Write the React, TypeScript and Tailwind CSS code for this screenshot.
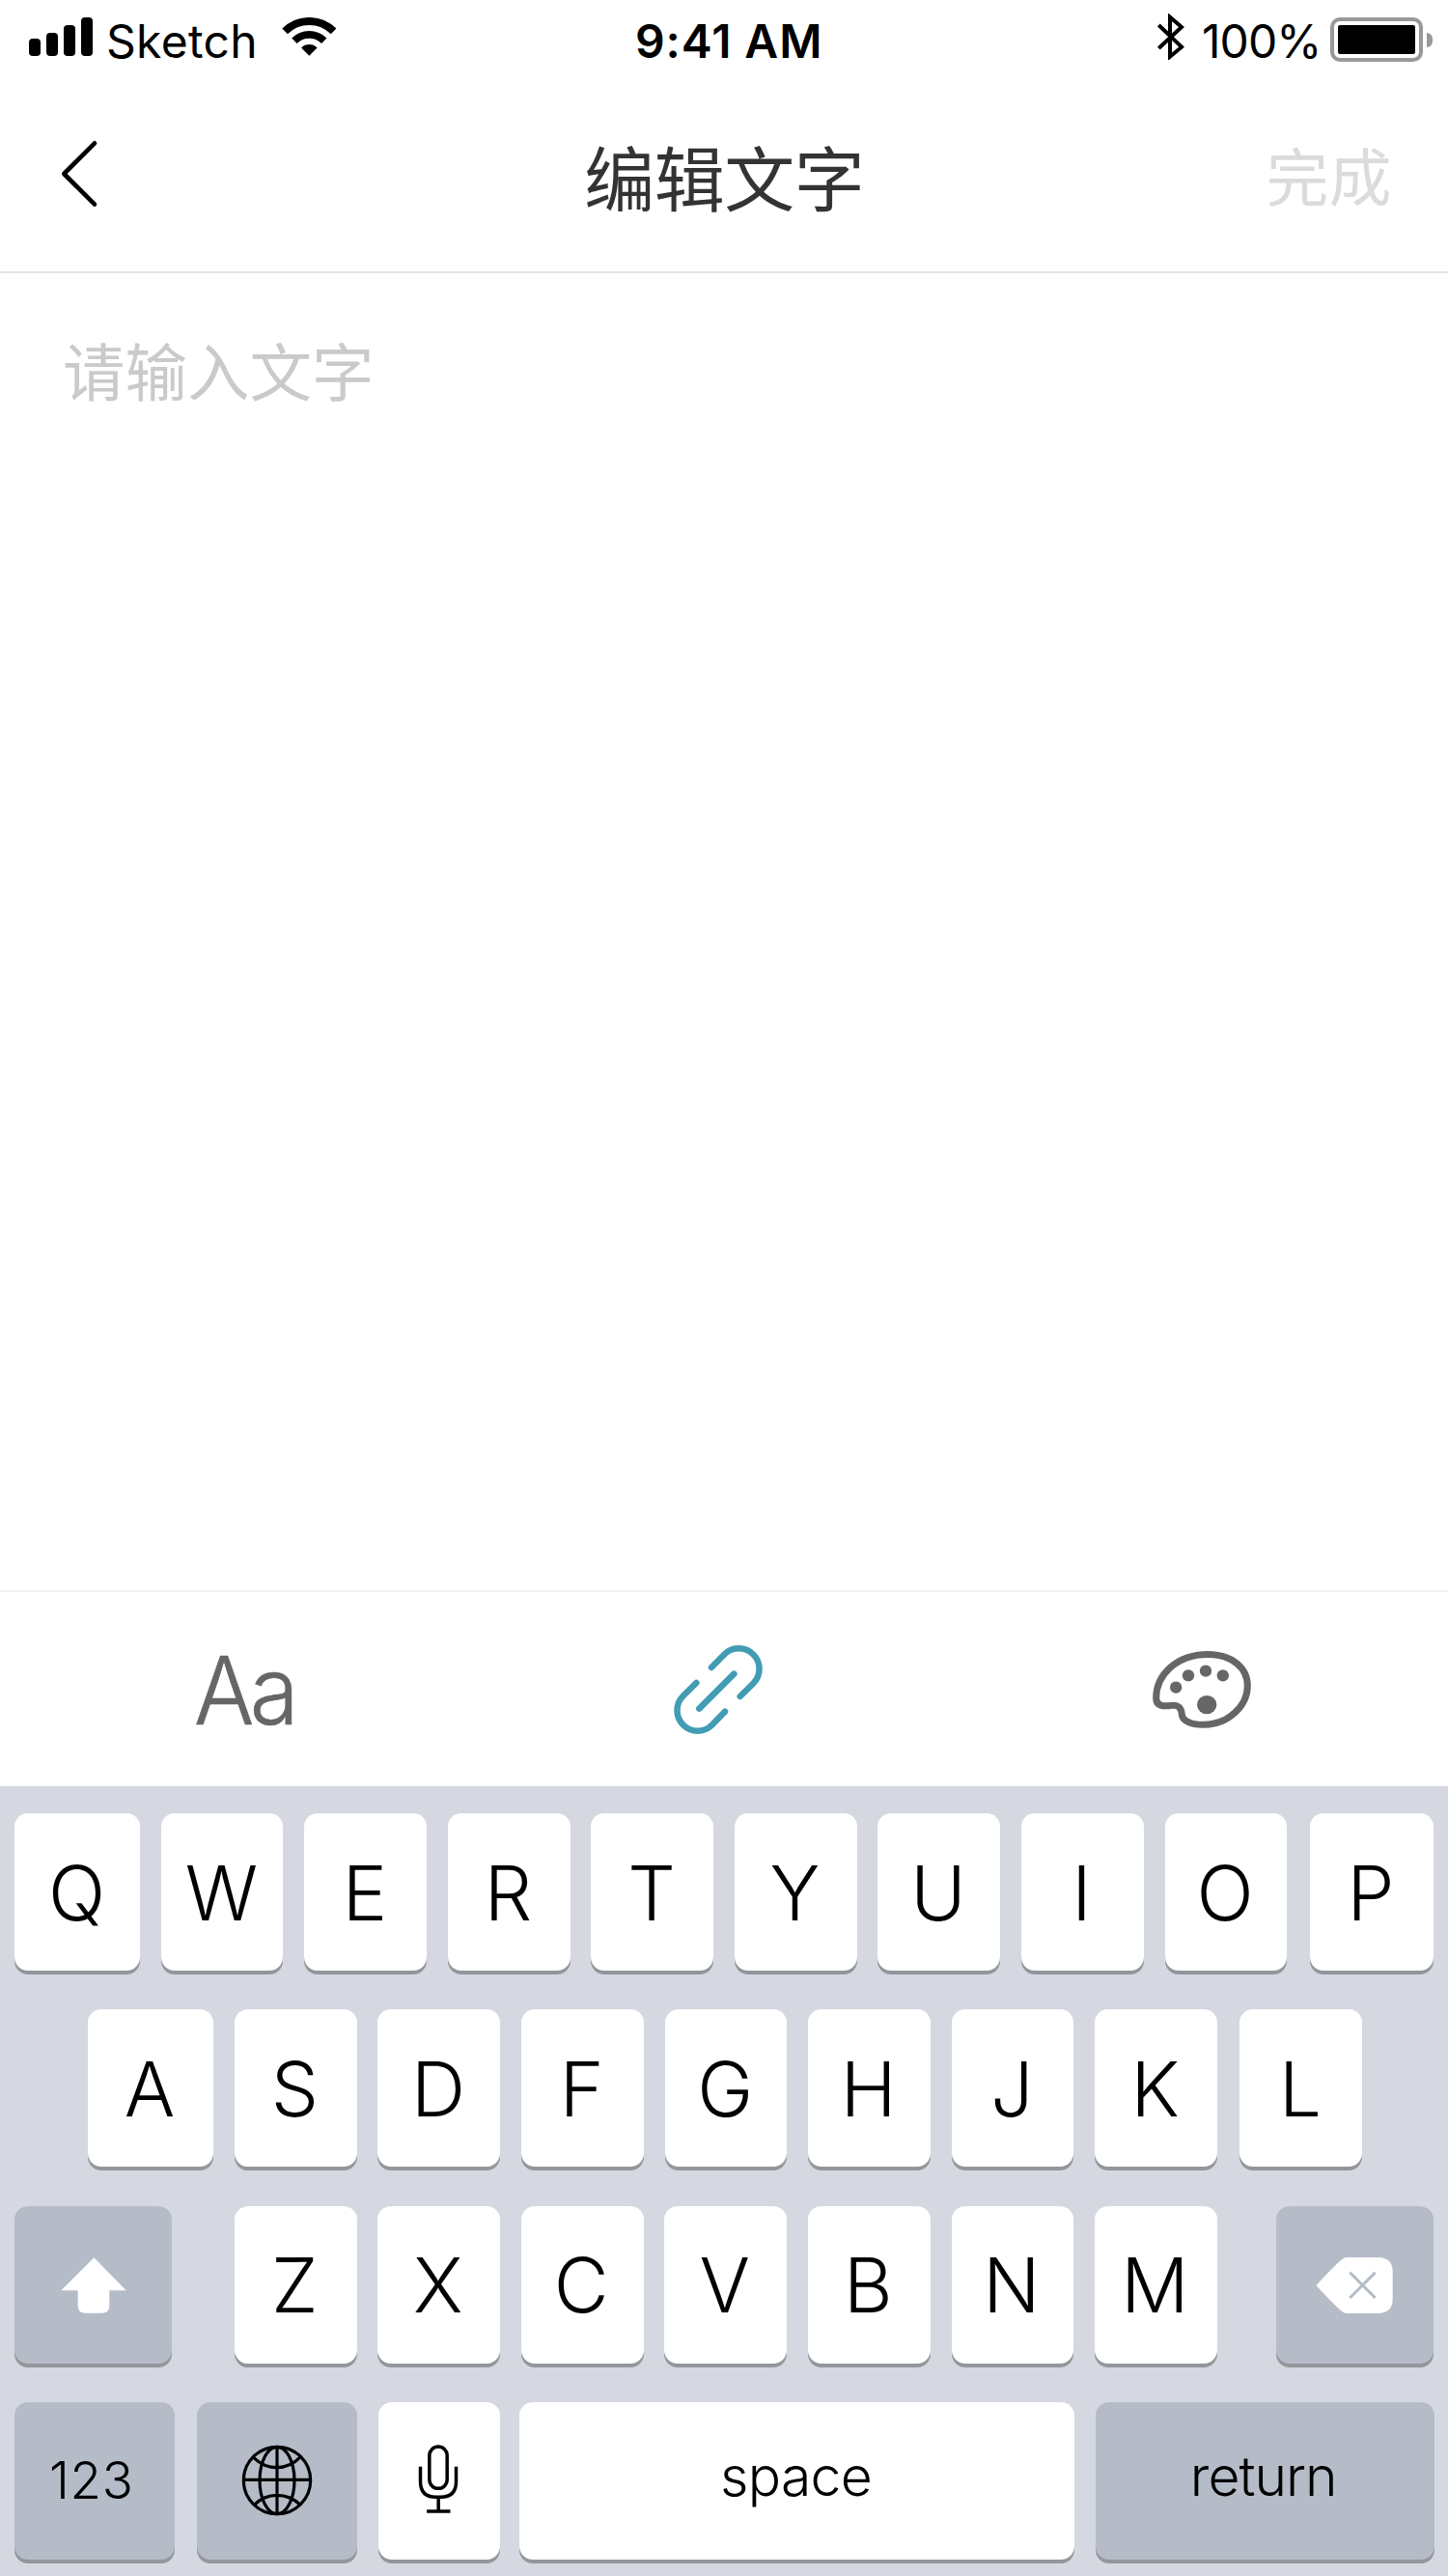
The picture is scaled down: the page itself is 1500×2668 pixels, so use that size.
import type { ReactNode } from "react";

type Tone = "light" | "dark";

function Key({ children, className = "w-[126.75px]", tone = "light" }: { children?: ReactNode; className?: string; tone?: Tone }) {
  return (
    <button
      className={`flex h-[163px] shrink-0 items-center justify-center rounded-[14px] pt-[2px] text-[78px] leading-none font-light text-black shadow-[0_4px_0_#93979c] ${
        tone === "light" ? "bg-white" : "bg-[#b5bcc8]"
      } ${className}`}
    >
      {children}
    </button>
  );
}

function StatusBar() {
  return (
    <div className="flex h-[84px] items-start text-[48px] leading-[58px]">
      <div className="ml-[30px] mt-[18px] flex h-10 items-end gap-[6px]">
        <span className="h-[18px] w-3 rounded-[4px] bg-black" />
        <span className="h-6 w-3 rounded-[4px] bg-black" />
        <span className="h-8 w-3 rounded-[4px] bg-black" />
        <span className="h-10 w-3 rounded-[4px] bg-black" />
      </div>
      <span className="ml-[14px] mt-[14px] w-[155px] shrink-0 tracking-[0.3px] whitespace-nowrap">Sketch</span>
      <svg className="ml-[26.6px] mt-[18px] h-10 w-[57px] shrink-0" viewBox="875 54 171 120" fill="none" stroke="#000">
        <path d="M884.3 97.3A107 107 0 0 1 1035.7 97.3" strokeWidth="24" />
        <path d="M913.7 126.7A65.5 65.5 0 0 1 1006.3 126.7" strokeWidth="23" />
        <path d="M960 173L935.3 148.3A35 35 0 0 1 984.7 148.3Z" fill="#000" stroke="none" />
      </svg>
      <span className="ml-[309.4px] mt-[14px] w-[200px] shrink-0 font-semibold tracking-[0.9px] whitespace-nowrap">9:41 AM</span>
      <svg className="ml-[341px] mt-[14px] h-12 w-7 shrink-0" viewBox="147 42 84 144" fill="none" stroke="#000" strokeWidth="12">
        <path d="M151 78L222 146L186 176V53L222 84L151 150" />
      </svg>
      <span className="ml-[18px] mt-[14px] w-[126px] shrink-0 tracking-[-0.9px] whitespace-nowrap">100%</span>
      <div className="ml-[7px] mt-[18px] flex shrink-0 items-center">
        <div className="h-[46px] w-24 rounded-[10px] border-4 border-[#999] p-1">
          <div className="h-full w-full rounded-[2px] bg-black" />
        </div>
        <div className="ml-1 h-[15px] w-[6px] rounded-r-full bg-[#999]" />
      </div>
    </div>
  );
}

function Header() {
  return (
    <header className="flex h-[199px] items-start justify-between border-b-2 border-[#e5e5e5] pr-[58px] pl-[62px]">
      <svg className="mt-[60px] h-[72px] w-[130px] shrink-0" viewBox="62 144 130 72" fill="none" stroke="#000" strokeWidth="4.6" strokeLinecap="round" strokeLinejoin="round">
        <path d="M98 148.3L66.3 180L98 211.7" />
      </svg>
      <h1 className="mt-[51px] mr-[3px] text-[73px] leading-[104px] tracking-[-0.5px] text-[#333]">编辑文字</h1>
      <button className="mt-[55px] mr-[0.5px] text-[65px] leading-[92px] text-[#dbdbdb]">完成</button>
    </header>
  );
}

function Toolbar() {
  return (
    <div className="flex h-[203px] items-start border-t-2 border-[#f0f0f0] text-[#666]">
      <span className="ml-[201px] mt-[52px] w-[105px] origin-left scale-x-[0.945] text-[98px] leading-[100px] font-light tracking-[-5px] [-webkit-text-stroke:0.6px_#666]">Aa</span>
      <svg className="ml-[384px] mt-[41px] h-[110px] w-[110px]" viewBox="0 0 330 330" fill="none" stroke="#429cb4" strokeWidth="19.500" strokeLinecap="round" strokeLinejoin="round">
        <path d="M141 111L181 70.500A63.600 63.600 0 0 1 271 160.500L230 201" />
        <path d="M94 159L53 199.500A63.600 63.600 0 0 0 143 289.500L183 248" />
        <path d="M211 131L103 239" />
      </svg>
      <svg className="ml-[393px] mt-[60px] h-[82px] w-[104px]" viewBox="279 237 312 246" fill="#666">
        <path
          d="M293 386C293 316 354 251 453 250.500C526 250.500 577 290 577 348C577 410 518 469 438 469C401 469 374 456 373 437C371 416 361 406 342 409C314 413 293 411 293 386Z"
          fill="none"
          stroke="#666"
          strokeWidth="21"
        />
        <circle cx="354.500" cy="353" r="18.500" />
        <circle cx="393" cy="316" r="18.500" />
        <circle cx="447" cy="302" r="18.500" />
        <circle cx="500.500" cy="316" r="18.500" />
        <ellipse cx="450.500" cy="407" rx="30.500" ry="29" />
      </svg>
    </div>
  );
}

function Keyboard() {
  return (
    <div className="flex h-[818px] flex-col gap-[40.2px] bg-[#d5d8e0] pt-[28.2px]">
      <div className="flex gap-[21.8px] pl-[14.5px]">
        <Key className="w-[130.4px]">Q</Key>
        {["W", "E", "R", "T", "Y", "U", "I", "O"].map((k) => (
          <Key key={k} className="w-[126.75px] pr-[1.5px]">{k}</Key>
        ))}
        <Key className="ml-[1.8px] w-[128px] pr-[1.5px]">P</Key>
      </div>
      <div className="flex gap-[21.8px] pl-[90.7px]">
        <Key className="w-[130.4px] pr-[1.5px]">A</Key>
        {["S", "D", "F", "G", "H", "J", "K"].map((k) => (
          <Key key={k} className="w-[126.75px] pr-[1.5px]">{k}</Key>
        ))}
        <Key className="ml-[1.6px] w-[126.75px] pr-[1.5px]">L</Key>
      </div>
      <div className="flex gap-[21.8px] pl-[14.5px]">
        <Key tone="dark" className="mr-[43.5px] w-[163px]">
          <svg className="ml-[1.5px] h-[58px] w-[68px]" viewBox="188 262 204 174" fill="#fff">
            <path d="M291 263L391 365H339V413Q339 435 317 435H263Q241 435 241 413V365H189Z" />
          </svg>
        </Key>
        {["Z", "X", "C", "V", "B", "N", "M"].map((k) => (
          <Key key={k} className="w-[126.75px] pr-[2px]">{k}</Key>
        ))}
        <Key tone="dark" className="ml-[39.2px] w-[163px]">
          <svg className="-mt-[1px] h-[58px] w-20" viewBox="1090 261 240 174" fill="#fff">
            <path d="M1091 348Q1153 281 1173 266Q1178 261 1186 261H1285Q1329 263 1329 305V391Q1329 433 1285 435H1186Q1178 435 1173 430Q1153 415 1091 348Z" />
            <path d="M1196 308L1275 387M1275 308L1196 387" stroke="#b5bcc8" strokeWidth="9" />
          </svg>
        </Key>
      </div>
      <div className="flex pl-[14.5px]">
        <Key tone="dark" className="w-[166.5px] pr-[6px] pb-[2px] text-[53px]! tracking-[0.6px]">123</Key>
        <Key tone="dark" className="ml-[23px] w-[166px]">
          <svg className="-mt-[3px] h-[74px] w-[74px]" viewBox="750 846 222 222" fill="none" stroke="#000" strokeWidth="9.500">
            <circle cx="861" cy="957" r="104" />
            <ellipse cx="861" cy="957" rx="54" ry="104" />
            <path d="M861 853V1061M757 955H965M788 886Q820 917 861 917T934 884M790 1033Q820 1003 861 1003T934 1033" />
          </svg>
        </Key>
        <Key className="ml-[21.5px] w-[126.5px]">
          <svg className="-mt-[4px] mr-[1px] h-[72px] w-[42px]" viewBox="1299.500 846 126 216" fill="none" stroke="#000" strokeWidth="10.500">
            <rect x="1335" y="852" width="55" height="130" rx="27.500" />
            <path d="M1307 914V961Q1307 1009 1355 1009H1370Q1418 1009 1418 961V914M1363 1009V1053M1327 1053H1400" />
          </svg>
        </Key>
        <Key className="ml-[20px] w-[575px] pr-[2px] pb-[11px] text-[57px]! tracking-[-0.7px]">space</Key>
        <Key tone="dark" className="ml-[21.5px] w-[351.5px] pr-[3px] pb-[11px] text-[57px]! tracking-[-1px]">return</Key>
      </div>
    </div>
  );
}

export default function App() {
  return (
    <div className="flex h-[2668px] w-[1500px] flex-col overflow-hidden bg-white font-['Inter','Noto_Sans_CJK_SC',sans-serif] text-black">
      <StatusBar />
      <Header />
      <main className="flex-1 px-[65px] pt-[58px]">
        <p className="text-[64.5px] leading-[92px] text-[#cacaca]">请输入文字</p>
      </main>
      <Toolbar />
      <Keyboard />
    </div>
  );
}
